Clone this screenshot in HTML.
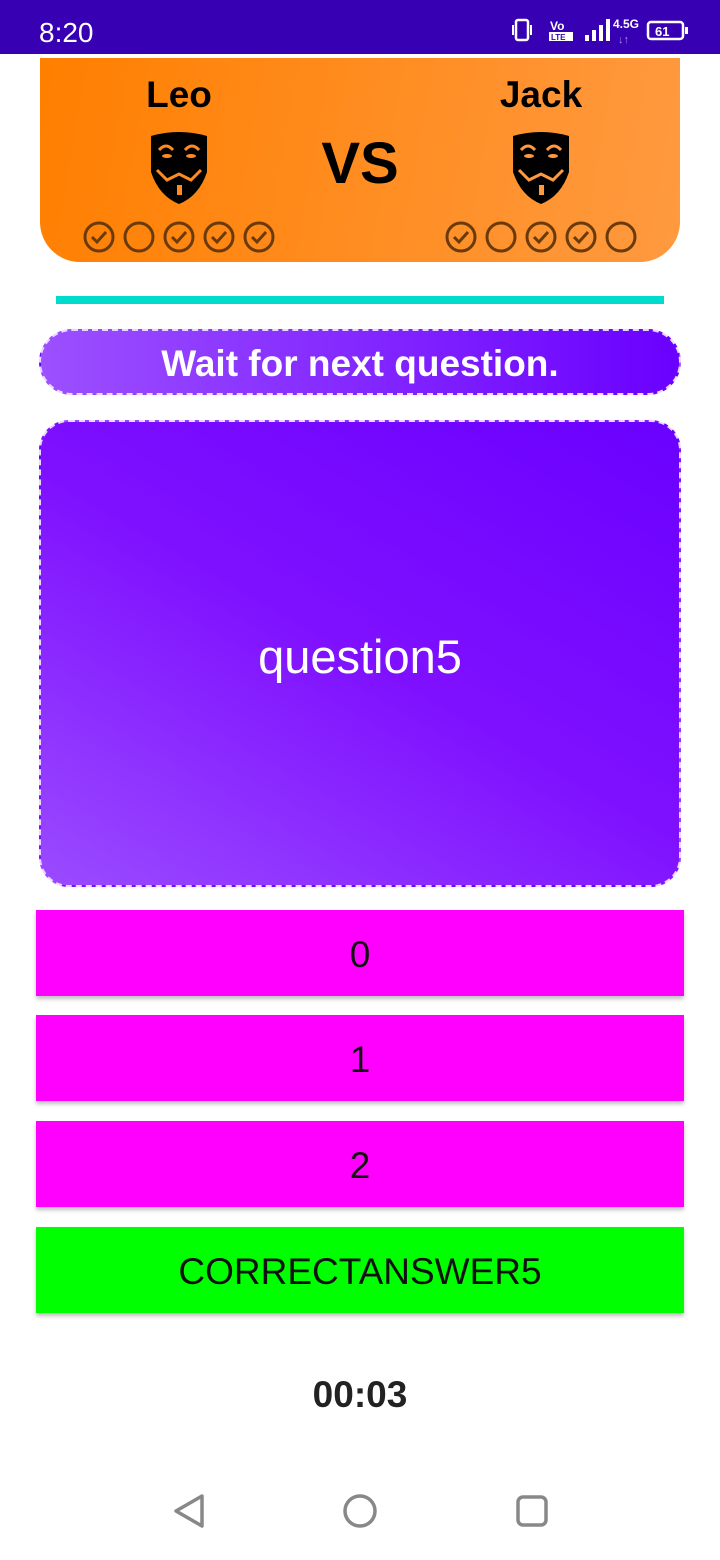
<!DOCTYPE html>
<html><head><style>
*{margin:0;padding:0;box-sizing:border-box}
body{width:720px;height:1560px;background:#fff;font-family:"Liberation Sans",Roboto,sans-serif;position:relative;overflow:hidden}
.sb{position:absolute;top:0;left:0;width:720px;height:54px;background:#3700B3;color:#fff}
.card{position:absolute;left:40px;top:58px;width:640px;height:204px;background:linear-gradient(100deg,#FF7F00 0%,#FF9A40 100%);border-radius:0 0 40px 40px}
.name{position:absolute;font-weight:bold;font-size:37px;color:#000;width:200px;text-align:center;top:16px}
.vs{position:absolute;left:0;width:640px;text-align:center;top:72px;font-weight:bold;font-size:58px}
.line{position:absolute;left:56px;top:296px;width:608px;height:8px;background:#00DCCB}
.wait{position:absolute;left:39px;top:329px;width:642px;height:66px;border-radius:33px;border:2px dashed #e8d8ff;background:linear-gradient(90deg,#9C50FF,#6A00FF);color:#fff;font-weight:bold;font-size:37px;text-align:center;line-height:66px}
.q{position:absolute;left:39px;top:420px;width:642px;height:467px;border-radius:30px;border:2px dashed #e8d8ff;background:linear-gradient(30deg,#9A4BFF 0%,#7F10FF 50%,#6A00FF 100%);color:#fff;font-size:47px;text-align:center;line-height:470px}
.btn{position:absolute;left:36px;width:648px;height:86px;background:#FF00FF;font-size:37px;text-align:center;line-height:90px;color:#111;box-shadow:0 3px 4px rgba(0,0,0,.25)}
.timer{position:absolute;left:0;width:720px;top:1374px;text-align:center;font-weight:bold;font-size:37px;color:#222}
</style></head><body>
<div class="sb">
<div style="position:absolute;left:39px;top:17px;font-size:28px">8:20</div>
<svg style="position:absolute;left:510px;top:16px" width="180" height="30" viewBox="0 0 180 30">
<rect x="6" y="4" width="12" height="20" rx="2" fill="none" stroke="#fff" stroke-width="2.5"/>
<rect x="2" y="9" width="2" height="10" fill="#fff"/><rect x="20" y="9" width="2" height="10" fill="#fff"/>
<text x="40" y="14" fill="#fff" font-size="12" font-weight="bold">Vo</text>
<rect x="39" y="16" width="24" height="9" fill="#fff"/><text x="41" y="24" fill="#3700B3" font-size="8" font-weight="bold">LTE</text>
<rect x="75" y="19" width="4" height="6" fill="#fff"/><rect x="82" y="14" width="4" height="11" fill="#fff"/><rect x="89" y="9" width="4" height="16" fill="#fff"/><rect x="96" y="3" width="4" height="22" fill="#fff"/>
<text x="103" y="12" fill="#fff" font-size="12" font-weight="bold">4.5G</text>
<text x="108" y="27" fill="#a58cf0" font-size="11">↓↑</text>
<rect x="138" y="6" width="35" height="17" rx="3" fill="none" stroke="#fff" stroke-width="2.5"/><rect x="175" y="11" width="3" height="7" fill="#fff"/>
<text x="145" y="20" fill="#fff" font-size="13" font-weight="bold">61</text>
</svg>
</div>
<div class="card">
<div class="name" style="left:39px">Leo</div>
<div class="name" style="left:401px">Jack</div>
<div class="vs">VS</div>
<svg style="position:absolute;left:109px;top:72px" width="60" height="76" viewBox="0 0 60 76"><path d="M2 6 Q30 -2 58 6 L58 42 Q50 66 30 74 Q10 66 2 42Z" fill="#000"/><path d="M10 20 Q17 12 24 20 M36 20 Q43 12 50 20" stroke="#FF8A20" stroke-width="3" fill="none"/><ellipse cx="18" cy="26" rx="5" ry="2" fill="#FF8A20"/><ellipse cx="42" cy="26" rx="5" ry="2" fill="#FF8A20"/><path d="M8 40 L18 50 L30 44 L42 50 L52 40" stroke="#FF8A20" stroke-width="3" fill="none"/><rect x="28" y="55" width="5" height="10" fill="#FF8A20"/></svg>
<svg style="position:absolute;left:471px;top:72px" width="60" height="76" viewBox="0 0 60 76"><path d="M2 6 Q30 -2 58 6 L58 42 Q50 66 30 74 Q10 66 2 42Z" fill="#000"/><path d="M10 20 Q17 12 24 20 M36 20 Q43 12 50 20" stroke="#FF9A40" stroke-width="3" fill="none"/><ellipse cx="18" cy="26" rx="5" ry="2" fill="#FF9A40"/><ellipse cx="42" cy="26" rx="5" ry="2" fill="#FF9A40"/><path d="M8 40 L18 50 L30 44 L42 50 L52 40" stroke="#FF9A40" stroke-width="3" fill="none"/><rect x="28" y="55" width="5" height="10" fill="#FF9A40"/></svg>
<svg style="position:absolute;left:0;top:160px" width="640" height="40">
<g fill="none" stroke="#6a3a0a" stroke-width="3">
<circle cx="59" cy="19" r="14"/><circle cx="99" cy="19" r="14"/><circle cx="139" cy="19" r="14"/><circle cx="179" cy="19" r="14"/><circle cx="219" cy="19" r="14"/>
<circle cx="421" cy="19" r="14"/><circle cx="461" cy="19" r="14"/><circle cx="501" cy="19" r="14"/><circle cx="541" cy="19" r="14"/><circle cx="581" cy="19" r="14"/>
<path d="M52 19l5 5 9-10M132 19l5 5 9-10M172 19l5 5 9-10M212 19l5 5 9-10M414 19l5 5 9-10M494 19l5 5 9-10M534 19l5 5 9-10"/>
</g></svg>
</div>
<div class="line"></div>
<div class="wait">Wait for next question.</div>
<div class="q">question5</div>
<div class="btn" style="top:910px">0</div>
<div class="btn" style="top:1015px">1</div>
<div class="btn" style="top:1121px">2</div>
<div class="btn" style="top:1227px;background:#00FF00">CORRECTANSWER5</div>
<div class="timer">00:03</div>
<svg style="position:absolute;left:0;top:1490px" width="720" height="44">
<g fill="none" stroke="#888" stroke-width="3.5" stroke-linejoin="round">
<path d="M202 6 L176 21 L202 36Z"/><circle cx="360" cy="21" r="15"/><rect x="518" y="7" width="28" height="28" rx="5"/>
</g></svg>
</body></html>
